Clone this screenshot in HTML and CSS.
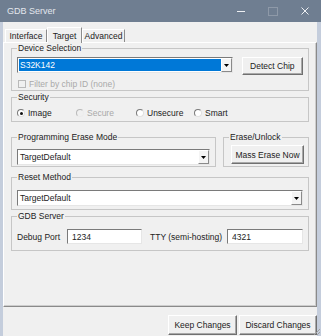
FILE: index.html
```html
<!DOCTYPE html>
<html lang="en">
<head>
    <meta charset="UTF-8">
    <meta name="viewport" content="width=device-width, initial-scale=1.0">
    <title>GDB Server</title>
    <link rel="stylesheet" href="styles.css">
</head>
<body>
    <div class="window">
        <div class="titlebar">
            <span class="title">GDB Server</span>
            <div class="controls">
                <span class="ctl"><svg width="8" height="8"><line x1="0" y1="4.5" x2="8" y2="4.5" stroke="#eef0f3"/></svg></span>
                <span class="ctl"><svg width="10" height="9"><rect x="0.5" y="0.5" width="9" height="8" fill="none" stroke="#8e99a8"/></svg></span>
                <span class="ctl"><svg width="8" height="8"><path d="M0.5 0.5L7.5 7.5M7.5 0.5L0.5 7.5" stroke="#eef0f3"/></svg></span>
            </div>
        </div>
        <div class="client">
            <div class="tabs">
                <div class="tab tab-interface">Interface</div>
                <div class="tab tab-target active">Target</div>
                <div class="tab tab-advanced">Advanced</div>
            </div>
            <div class="panel">
                <fieldset class="group device">
                    <legend>Device Selection</legend>
                    <div class="device-row">
                        <div class="combo chip-combo">
                            <span class="value selected">S32K142</span>
                            <span class="arrow"><svg width="5" height="3"><path d="M0 0H5L2.5 3Z" fill="#000"/></svg></span>
                        </div>
                        <button class="btn detect-btn">Detect Chip</button>
                    </div>
                    <div class="check-row disabled">
                        <span class="checkbox"></span>
                        <span>Filter by chip ID (none)</span>
                    </div>
                </fieldset>

                <fieldset class="group security">
                    <legend>Security</legend>
                    <div class="radio-row">
                        <label class="radio-item w-image"><span class="radio checked"></span>Image</label>
                        <label class="radio-item w-secure disabled"><span class="radio"></span>Secure</label>
                        <label class="radio-item w-unsecure"><span class="radio"></span>Unsecure</label>
                        <label class="radio-item"><span class="radio"></span>Smart</label>
                    </div>
                </fieldset>

                <div class="split-row">
                    <fieldset class="group erase-mode">
                        <legend>Programming Erase Mode</legend>
                        <div class="combo">
                            <span class="value">TargetDefault</span>
                            <span class="arrow"><svg width="5" height="3"><path d="M0 0H5L2.5 3Z" fill="#000"/></svg></span>
                        </div>
                    </fieldset>
                    <fieldset class="group unlock">
                        <legend>Erase/Unlock</legend>
                        <button class="btn mass-btn">Mass Erase Now</button>
                    </fieldset>
                </div>

                <fieldset class="group reset">
                    <legend>Reset Method</legend>
                    <div class="combo">
                        <span class="value">TargetDefault</span>
                        <span class="arrow"><svg width="5" height="3"><path d="M0 0H5L2.5 3Z" fill="#000"/></svg></span>
                    </div>
                </fieldset>

                <fieldset class="group gdb">
                    <legend>GDB Server</legend>
                    <div class="port-row">
                        <span class="port-label">Debug Port</span>
                        <input class="field" type="text" value="1234">
                        <span class="port-label tty-label">TTY (semi-hosting)</span>
                        <input class="field" type="text" value="4321">
                    </div>
                </fieldset>
            </div>
            <div class="footer">
                <button class="btn keep-btn">Keep Changes</button>
                <button class="btn discard-btn">Discard Changes</button>
            </div>
        </div>
        <svg class="grip" width="9" height="9"><path d="M8 2L2 8M8 5L5 8M8 8L8 8" stroke="#a0a0a0" stroke-width="1"/></svg>
    </div>
</body>
</html>
```

FILE: styles.css
```css
* {
    box-sizing: border-box;
}
body {
    margin: 0;
    font-family: "Liberation Sans", Arial, sans-serif;
    font-size: 8.5px;
    color: #222;
}
.window {
    width: 321px;
    height: 336px;
    background: #f0f0f0;
    display: flex;
    flex-direction: column;
    position: relative;
    overflow: hidden;
}
.titlebar {
    height: 22px;
    flex-shrink: 0;
    background: #6f7e91;
    display: flex;
    align-items: center;
}
.title {
    flex: 1;
    padding-left: 7px;
    color: #e3e7ed;
    font-size: 9px;
}
.controls {
    display: flex;
}
.ctl {
    width: 32px;
    height: 22px;
    display: flex;
    align-items: center;
    justify-content: center;
}
.client {
    flex: 1;
    display: flex;
    flex-direction: column;
    border-left: 3px solid #c4cddc;
    border-right: 4px solid #c4cddc;
}

/* tabs */
.tabs {
    height: 20px;
    display: flex;
    align-items: flex-end;
    padding-left: 2px;
}
.tab {
    height: 13px;
    display: flex;
    align-items: center;
    justify-content: center;
    border: 1px solid;
    border-bottom: none;
    border-color: #fff #8c8c8c transparent #fff;
}
.tab-interface {
    width: 42px;
}
.tab-target {
    width: 35px;
}
.tab-advanced {
    width: 43px;
}
.tab.active {
    height: 16px;
    margin-bottom: -1px;
    background: #f0f0f0;
    position: relative;
    z-index: 1;
}

.panel {
    height: 265px;
    flex-shrink: 0;
    padding: 0 7px;
    border: 1px solid;
    border-color: #fff #8a8a8a #8a8a8a #fff;
    box-shadow: inset -1px -1px #cdcdcd;
}

/* group boxes */
fieldset {
    margin: 0;
    padding: 0 5px;
    border: 1px solid #c6c6c6;
    min-width: 0;
}
legend {
    padding: 0 1px;
    height: 10px;
    line-height: 10px;
}
.device {
    height: 48px;
    padding-top: 4px;
}
.device-row {
    display: flex;
    gap: 9px;
}
.chip-combo {
    width: 218px;
    height: 17px;
}
.detect-btn {
    width: 62px;
    height: 18px;
}
.check-row {
    display: flex;
    align-items: center;
    height: 9px;
    margin-top: 4px;
    padding-left: 1px;
}
.checkbox {
    width: 8px;
    height: 8px;
    margin-right: 3px;
    border: 1px solid #b9b9b9;
    background: #f0f0f0;
}
.disabled {
    color: #a9a9a9;
}

.security {
    height: 30px;
    margin-top: 1px;
    padding-top: 5px;
}
.radio-row {
    display: flex;
    height: 12px;
    align-items: center;
}
.radio-item {
    display: flex;
    align-items: center;
}
.w-image {
    width: 59px;
}
.w-secure {
    width: 60px;
}
.w-unsecure {
    width: 58px;
}
.radio {
    width: 8px;
    height: 8px;
    margin-right: 3px;
    border-radius: 50%;
    border: 1px solid;
    border-color: #7a7a7a #e0e0e0 #e0e0e0 #7a7a7a;
    background: #fff;
    display: flex;
    align-items: center;
    justify-content: center;
}
.radio.checked::after {
    content: "";
    width: 3px;
    height: 3px;
    border-radius: 50%;
    background: #111;
}
.disabled .radio {
    background: #f0f0f0;
    border-color: #b9b9b9 #ececec #ececec #b9b9b9;
}

.split-row {
    display: flex;
    gap: 7px;
    margin-top: 10px;
}
.erase-mode {
    width: 205px;
    height: 35px;
    padding-top: 7px;
}
.unlock {
    flex: 1;
    height: 35px;
    padding-top: 3px;
}
.mass-btn {
    width: 73px;
    height: 19px;
    margin-left: 2px;
}

.reset {
    height: 38px;
    margin-top: 5px;
    padding-top: 8px;
}
.gdb {
    height: 40px;
    margin-top: 1px;
    padding-top: 8px;
}
.port-row {
    display: flex;
    align-items: center;
}
.port-label {
    width: 50px;
}
.tty-label {
    width: 77px;
    margin-left: 8px;
}

/* controls */
.combo {
    height: 16px;
    display: flex;
    background: #fff;
    border: 1px solid;
    border-color: #7a7a7a #e6e6e6 #e6e6e6 #7a7a7a;
}
.combo .value {
    flex: 1;
    display: flex;
    align-items: center;
    padding-left: 2px;
}
.combo .value.selected {
    margin: 1px 0 1px 1px;
    padding-left: 1px;
    background: #0078d7;
    color: #fff;
}
.arrow {
    width: 11px;
    display: flex;
    align-items: center;
    justify-content: center;
    background: #f4f4f4;
    border: 1px solid;
    border-color: #fff #8a8a8a #8a8a8a #fff;
}
.btn {
    padding: 0;
    font: inherit;
    color: #222;
    background: #f0f0f0;
    border: 1px solid;
    border-color: #fff #707070 #707070 #fff;
    box-shadow: inset -1px -1px #a9a9a9;
}
.field {
    height: 15px;
    padding: 0 0 0 4px;
    font: inherit;
    color: #222;
    background: #fff;
    border: 1px solid;
    border-color: #7a7a7a #e6e6e6 #e6e6e6 #7a7a7a;
}
.port-row .field:nth-of-type(1) {
    width: 75px;
}
.port-row .field:nth-of-type(2) {
    width: 76px;
}

.footer {
    flex: 1;
    display: flex;
    justify-content: flex-end;
    gap: 2px;
    padding-top: 8px;
}
.keep-btn {
    width: 69px;
    height: 20px;
}
.discard-btn {
    width: 78px;
    height: 20px;
}
.grip {
    position: absolute;
    right: 0;
    bottom: 0;
}
```
